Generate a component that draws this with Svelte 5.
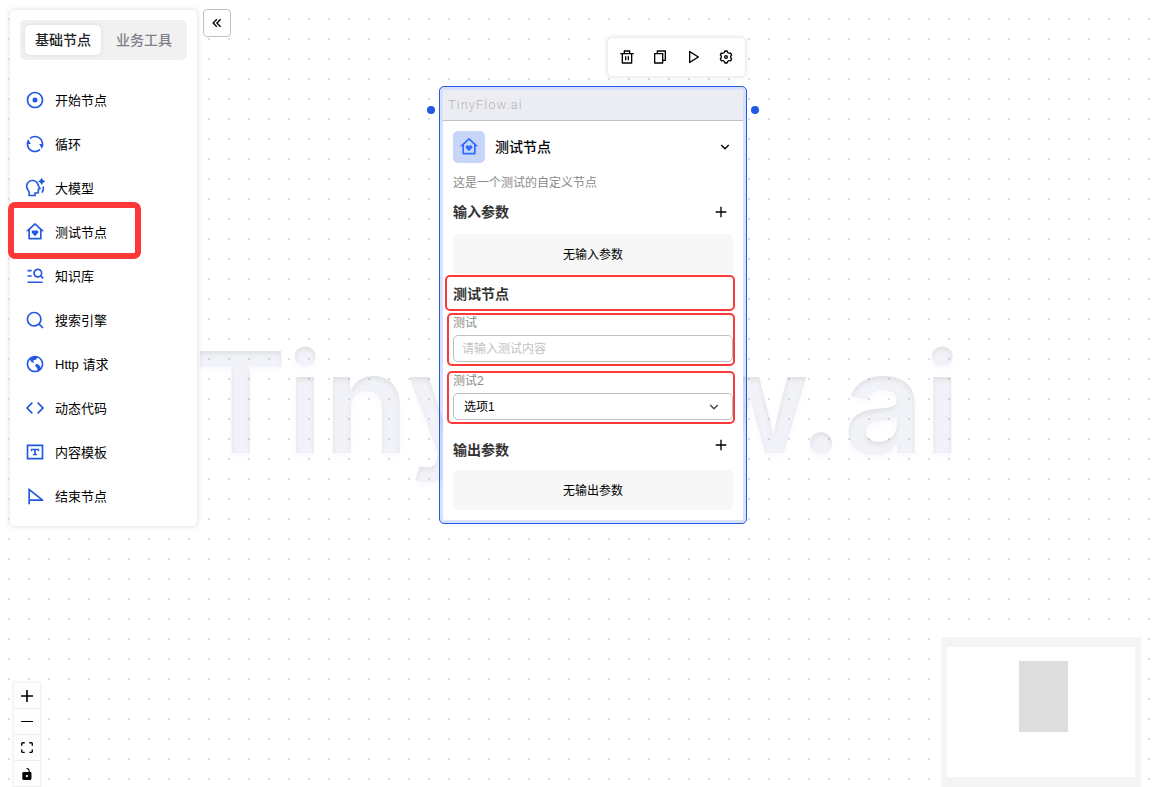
<script>
  const home =
    'M20 20C20 20.5523 19.5523 21 19 21H5C4.44772 21 4 20.5523 4 20V11L1 11L11.3273 1.6115C11.7087 1.26475 12.2913 1.26475 12.6727 1.6115L23 11L20 11V20ZM18 19V9.15745L12 3.7029L6 9.15745V19H18ZM12 17L8.64124 13.6412C7.76256 12.7625 7.76256 11.3379 8.64124 10.4592C9.51992 9.58056 10.9445 9.58056 11.8232 10.4592L12 10.636L12.1768 10.4592C13.0555 9.58056 14.4801 9.58056 15.3588 10.4592C16.2375 11.3379 16.2375 12.7625 15.3588 13.6412L12 17Z';

  const nodeTypes = [
    {
      label: '开始节点',
      icon: 'M12 22C6.477 22 2 17.523 2 12S6.477 2 12 2s10 4.477 10 10-4.477 10-10 10Zm0-2a8 8 0 1 0 0-16 8 8 0 0 0 0 16Zm0-5a3 3 0 1 1 0-6 3 3 0 0 1 0 6Z'
    },
    {
      label: '循环',
      icon: 'M5.46257 4.43262C7.21556 2.91688 9.5007 2 12 2C17.5228 2 22 6.47715 22 12C22 14.1361 21.3302 16.1158 20.1892 17.7406L17 12H20C20 7.58172 16.4183 4 12 4C9.84982 4 7.89777 4.84827 6.46023 6.22842L5.46257 4.43262ZM18.5374 19.5674C16.7844 21.0831 14.4993 22 12 22C6.47715 22 2 17.5228 2 12C2 9.86386 2.66979 7.88416 3.8108 6.25944L7 12H4C4 16.4183 7.58172 20 12 20C14.1502 20 16.1022 19.1517 17.5398 17.7716L18.5374 19.5674Z'
    },
    {
      label: '大模型',
      icon: 'M20.7134 7.12811L20.4668 7.69379C20.2864 8.10792 19.7136 8.10792 19.5331 7.69379L19.2866 7.12811C18.8471 6.11947 18.0555 5.31641 17.0677 4.87708L16.308 4.53922C15.8973 4.35653 15.8973 3.75881 16.308 3.57612L17.0252 3.25714C18.0384 2.80651 18.8442 1.97373 19.2761 0.930828L19.5293 0.319534C19.7058 -0.106511 20.2942 -0.106511 20.4706 0.319534L20.7238 0.930828C21.1558 1.97373 21.9616 2.80651 22.9748 3.25714L23.6919 3.57612C24.1027 3.75881 24.1027 4.35653 23.6919 4.53922L22.9323 4.87708C21.9445 5.31641 21.1529 6.11947 20.7134 7.12811ZM9 2C13.0675 2 16.4262 5.03562 16.9337 8.96494L19.1842 12.5037C19.3324 12.7367 19.3025 13.0847 18.9593 13.2317L17 14.071V17C17 18.1046 16.1046 19 15 19H13.001L13 22H4L4.00025 18.3061C4.00033 17.1252 3.56351 16.0087 2.7555 15.0011C1.65707 13.6313 1 11.8924 1 10C1 5.58172 4.58172 2 9 2ZM9 4C5.68629 4 3 6.68629 3 10C3 11.3849 3.46818 12.6929 4.31578 13.7499C5.40965 15.114 6.00036 16.6672 6.00025 18.3063L6.00013 20H11.0007L11.0017 17H15V12.7519L16.5497 12.0881L15.0072 9.66262L14.9501 9.22118C14.5665 6.25141 12.0243 4 9 4ZM19.4893 16.9929L21.1535 18.1024C22.32 16.3562 23 14.2576 23 12.0001C23 11.317 22.9378 10.6486 22.8186 10L20.8756 10.5C20.9574 10.9878 21 11.489 21 12.0001C21 13.8471 20.4436 15.5642 19.4893 16.9929Z'
    },
    { label: '测试节点', icon: home, marked: true },
    {
      label: '知识库',
      icon: 'M3 4.5H8V6.5H3V4.5ZM3 11H8V13H3V11ZM3 18.5H21V20.5H3V18.5ZM15.5 3A5.5 5.5 0 0 1 20.1 11.6L22.7 14.2L21.3 15.6L18.6 12.9A5.5 5.5 0 1 1 15.5 3ZM15.5 5A3.5 3.5 0 1 0 15.5 12A3.5 3.5 0 0 0 15.5 5Z'
    },
    {
      label: '搜索引擎',
      icon: 'M18.031 16.6168L22.3137 20.8995L20.8995 22.3137L16.6168 18.031C15.0769 19.263 13.124 20 11 20C6.032 20 2 15.968 2 11C2 6.032 6.032 2 11 2C15.968 2 20 6.032 20 11C20 13.124 19.263 15.0769 18.031 16.6168ZM16.0247 15.8748C17.2475 14.6146 18 12.8956 18 11C18 7.1325 14.8675 4 11 4C7.1325 4 4 7.1325 4 11C4 14.8675 7.1325 18 11 18C12.8956 18 14.6146 17.2475 15.8748 16.0247L16.0247 15.8748Z'
    },
    {
      label: 'Http 请求',
      icon: 'M6.23509 6.45329C4.85101 7.89148 4 9.84636 4 12C4 16.4183 7.58172 20 12 20C13.0808 20 14.1116 19.7857 15.0521 19.3972C15.1671 18.6467 14.9148 17.9266 14.8116 17.6746C14.582 17.115 13.8241 16.1582 12.5589 14.8308C12.2212 14.4758 12.2429 14.2035 12.3636 13.3943L12.3775 13.3029C12.4595 12.7486 12.5971 12.4209 14.4622 12.1248C15.4097 11.9746 15.6589 12.3533 16.0043 12.8777C16.0425 12.9358 16.0807 12.9928 16.1198 13.0499C16.4479 13.5297 16.691 13.6394 17.0582 13.8064C17.2227 13.881 17.428 13.9751 17.7031 14.1314C18.3551 14.504 18.3551 14.9247 18.3551 15.8472V15.9518C18.3551 16.3434 18.3168 16.6872 18.2566 16.9859C19.3478 15.6185 20 13.8854 20 12C20 8.70089 18.003 5.8682 15.1519 4.64482C14.5987 5.01813 13.8398 5.54726 13.575 5.91C13.4396 6.09538 13.2482 7.04166 12.6257 7.11976C12.4626 7.14023 12.2438 7.12589 12.012 7.11097C11.3905 7.07058 10.5402 7.01606 10.268 7.75495C10.0952 8.2232 10.0648 9.49445 10.6239 10.1543C10.7134 10.2597 10.7307 10.4547 10.6699 10.6735C10.59 10.9608 10.4286 11.1356 10.3783 11.1717C10.2819 11.1163 10.0896 10.8931 9.95938 10.7412C9.64554 10.3765 9.25405 9.92233 8.74797 9.78176C8.56395 9.73083 8.36166 9.68867 8.16548 9.64736C7.6164 9.53227 6.99443 9.40134 6.84992 9.09302C6.74442 8.8672 6.74488 8.55621 6.74529 8.22764C6.74529 7.8112 6.74529 7.34029 6.54129 6.88256C6.46246 6.70541 6.35689 6.56446 6.23509 6.45329ZM12 22C6.47715 22 2 17.5228 2 12C2 6.47715 6.47715 2 12 2C17.5228 2 22 6.47715 22 12C22 17.5228 17.5228 22 12 22Z'
    },
    {
      label: '动态代码',
      icon: 'M23 12L15.9289 19.0711L14.5147 17.6569L20.1716 12L14.5147 6.34317L15.9289 4.92896L23 12ZM3.82843 12L9.48528 17.6569L8.07107 19.0711L1 12L8.07107 4.92896L9.48528 6.34317L3.82843 12Z'
    },
    {
      label: '内容模板',
      icon: 'M2 3H22V21H2V3ZM4 5V19H20V5H4ZM7 8H17V11H15.5V9.8H13V14.4H14.5V16H9.5V14.4H11V9.8H8.5V11H7V8Z'
    },
    {
      label: '结束节点',
      icon: 'M4 2.2L22 16.6V18H6V22H4V2.2ZM6 6.3V16H18.1L6 6.3Z'
    }
  ];

  const toolbar = [
    {
      label: '删除',
      icon: 'M17 6H22V8H20V21C20 21.5523 19.5523 22 19 22H5C4.44772 22 4 21.5523 4 21V8H2V6H7V3C7 2.44772 7.44772 2 8 2H16C16.5523 2 17 2.44772 17 3V6ZM18 8H6V20H18V8ZM9 11H11V17H9V11ZM13 11H15V17H13V11ZM9 4V6H15V4H9Z'
    },
    {
      label: '复制',
      icon: 'M6.9998 6V3C6.9998 2.44772 7.44752 2 7.9998 2H19.9998C20.5521 2 20.9998 2.44772 20.9998 3V17C20.9998 17.5523 20.5521 18 19.9998 18H16.9998V20.9991C16.9998 21.5519 16.5499 22 15.993 22H4.00666C3.45059 22 3 21.5554 3 20.9991L3.0026 7.00087C3.0027 6.44811 3.45264 6 4.00942 6H6.9998ZM5.00242 8L5.00019 20H14.9998V8H5.00242ZM8.9998 6H16.9998V16H18.9998V4H8.9998V6Z'
    },
    {
      label: '运行',
      icon: 'M8 18.3915V5.60846L18.2264 12L8 18.3915ZM6 3.80421V20.1957C6 20.9812 6.86395 21.46 7.53 21.0437L20.6432 12.848C21.2699 12.4563 21.2699 11.5436 20.6432 11.152L7.53 2.95621C6.86395 2.53993 6 3.01878 6 3.80421Z'
    },
    {
      label: '设置',
      icon: 'M3.33946 17.0002C2.90721 16.2515 2.58277 15.4702 2.36133 14.6741C3.3338 14.1779 3.99972 13.1668 3.99972 12.0002C3.99972 10.8345 3.3348 9.824 2.36353 9.32741C2.81025 7.71651 3.65857 6.21627 4.86474 4.99001C5.7807 5.58416 6.98935 5.65534 7.99972 5.072C9.01009 4.48866 9.55277 3.40635 9.4962 2.31604C11.1613 1.8846 12.8847 1.90004 14.5031 2.31862C14.4475 3.40806 14.9901 4.48912 15.9997 5.072C17.0101 5.65532 18.2187 5.58416 19.1346 4.99007C19.7133 5.57986 20.2277 6.25151 20.66 7.00021C21.0922 7.7489 21.4167 8.53025 21.6381 9.32628C20.6656 9.82247 19.9997 10.8336 19.9997 12.0002C19.9997 13.166 20.6646 14.1764 21.6359 14.673C21.1892 16.2839 20.3409 17.7841 19.1347 19.0104C18.2187 18.4163 17.0101 18.3451 15.9997 18.9284C14.9893 19.5117 14.4467 20.5941 14.5032 21.6844C12.8382 22.1158 11.1148 22.1004 9.49633 21.6818C9.55191 20.5923 9.00929 19.5113 7.99972 18.9284C6.98938 18.3451 5.78079 18.4162 4.86484 19.0103C4.28617 18.4205 3.77172 17.7489 3.33946 17.0002ZM8.99972 17.1964C10.0911 17.8265 10.8749 18.8227 11.2503 19.9659C11.7486 20.0133 12.2502 20.014 12.7486 19.9675C13.1238 18.8237 13.9078 17.8268 14.9997 17.1964C16.0916 16.5659 17.347 16.3855 18.5252 16.6324C18.8146 16.224 19.0648 15.7892 19.2729 15.334C18.4706 14.4373 17.9997 13.2604 17.9997 12.0002C17.9997 10.74 18.4706 9.5632 19.2729 8.6665C19.1688 8.4405 19.0538 8.21822 18.9279 8.00021C18.802 7.78219 18.667 7.57148 18.5233 7.36842C17.3457 7.61476 16.0911 7.43414 14.9997 6.80405C13.9083 6.17395 13.1246 5.17768 12.7491 4.03455C12.2509 3.98714 11.7492 3.98646 11.2509 4.03292C10.8756 5.17671 10.0916 6.17364 8.99972 6.80405C7.9078 7.43447 6.65245 7.61494 5.47428 7.36803C5.18485 7.77641 4.93463 8.21117 4.72656 8.66637C5.52881 9.56311 5.99972 10.74 5.99972 12.0002C5.99972 13.2604 5.52883 14.4372 4.72656 15.3339C4.83067 15.5599 4.94564 15.7822 5.07152 16.0002C5.19739 16.2182 5.3324 16.4289 5.47612 16.632C6.65377 16.3857 7.90838 16.5663 8.99972 17.1964ZM11.9997 15.0002C10.3429 15.0002 8.99972 13.6571 8.99972 12.0002C8.99972 10.3434 10.3429 9.00021 11.9997 9.00021C13.6566 9.00021 14.9997 10.3434 14.9997 12.0002C14.9997 13.6571 13.6566 15.0002 11.9997 15.0002ZM11.9997 13.0002C12.552 13.0002 12.9997 12.5525 12.9997 12.0002C12.9997 11.4479 12.552 11.0002 11.9997 11.0002C11.4474 11.0002 10.9997 11.4479 10.9997 12.0002C10.9997 12.5525 11.4474 13.0002 11.9997 13.0002Z'
    }
  ];

  const controls = [
    { label: '放大', box: '0 0 32 32', icon: 'M32 18.133H18.133V32h-4.266V18.133H0v-4.266h13.867V0h4.266v13.867H32z' },
    { label: '缩小', box: '0 0 32 5', icon: 'M0 0h32v4.2H0z' },
    {
      label: '适应画布',
      box: '0 0 32 30',
      icon: 'M3.692 4.63c0-.53.4-.938.939-.938h5.215V0H4.708C2.13 0 0 2.054 0 4.63v5.216h3.692V4.631zM27.354 0h-5.2v3.692h5.17c.53 0 .984.4.984.939v5.215H32V4.631A4.624 4.624 0 0027.354 0zm.954 24.83c0 .532-.4.94-.939.94h-5.215v3.768h5.215c2.577 0 4.631-2.13 4.631-4.707v-5.139h-3.692v5.139zm-23.677.94c-.531 0-.939-.4-.939-.94v-5.138H0v5.139c0 2.577 2.13 4.707 4.708 4.707h5.138V25.77H4.631z'
    },
    {
      label: '锁定',
      box: '0 0 25 32',
      icon: 'M21.333 10.667H19.81V7.619C19.81 3.429 16.38 0 12.19 0c-4.114 1.828-1.37 2.133.305 2.438 1.676.305 4.42 2.59 4.42 5.181v3.048H3.047A3.056 3.056 0 000 13.714v15.238A3.056 3.056 0 003.048 32h18.285a3.056 3.056 0 003.048-3.048V13.714a3.056 3.056 0 00-3.048-3.047zM12.19 24.533a3.056 3.056 0 01-3.047-3.047 3.056 3.056 0 013.047-3.048 3.056 3.056 0 013.048 3.048 3.056 3.056 0 01-3.048 3.047z'
    }
  ];

  let tab = $state('基础节点');
  let collapsed = $state(false);
  let expanded = $state(true);
  let text = $state('');
  let choice = $state('选项1');
</script>

{#snippet icon(d)}
  <svg viewBox="0 0 24 24" fill="currentColor" aria-hidden="true"><path {d} fill-rule="evenodd" /></svg>
{/snippet}

{#snippet plus()}
  <svg viewBox="0 0 24 24" fill="currentColor" aria-hidden="true"><path d="M11 11V4H13V11H20V13H13V20H11V13H4V11H11Z" /></svg>
{/snippet}

<main class="canvas">
  <div class="watermark" aria-hidden="true"><span>TinyFlow.ai</span></div>
  <svg class="dots" aria-hidden="true">
    <pattern id="grid" width="20" height="20" patternUnits="userSpaceOnUse">
      <rect x="8" y="18" width="2" height="2" fill="#000" fill-opacity="0.13" />
    </pattern>
    <rect width="100%" height="100%" fill="url(#grid)" />
  </svg>

  <div class="side">
    {#if !collapsed}
      <aside class="palette">
        <div class="tabs">
          {#each ['基础节点', '业务工具'] as name}
            <button class="tab" class:active={tab === name} onclick={() => (tab = name)}>{name}</button>
          {/each}
        </div>
        <div class="types">
          {#each nodeTypes as t}
            <button class="type" class:marked={t.marked}>{@render icon(t.icon)}<span>{t.label}</span></button>
          {/each}
        </div>
      </aside>
    {/if}
    <button class="toggle" aria-label="收起面板" onclick={() => (collapsed = !collapsed)}>
      <svg viewBox="0 0 24 24" fill="currentColor" aria-hidden="true">
        <path d="M4.83582 12L11.0429 18.2071L12.4571 16.7929L7.66424 12L12.4571 7.20712L11.0429 5.79291L4.83582 12ZM10.4857 12L16.6928 18.2071L18.107 16.7929L13.3141 12L18.107 7.20712L16.6928 5.79291L10.4857 12Z" />
      </svg>
    </button>
  </div>

  <div class="node">
    <div class="toolbar">
      {#each toolbar as t}
        <button aria-label={t.label}>{@render icon(t.icon)}</button>
      {/each}
    </div>
    <i class="handle in"></i>
    <i class="handle out"></i>
    <div class="card">
      <div class="brand">TinyFlow.ai</div>
      <div class="body">
        <div class="title">
          <span class="badge">{@render icon(home)}</span>
          <span class="name">测试节点</span>
          <button class="plain" aria-label="展开" aria-expanded={expanded} onclick={() => (expanded = !expanded)}>
            <svg viewBox="0 0 24 24" fill="currentColor" aria-hidden="true"><path d="M11.9999 13.1714L16.9497 8.22168L18.3639 9.63589L11.9999 15.9999L5.63599 9.63589L7.0502 8.22168L11.9999 13.1714Z" /></svg>
          </button>
        </div>
        <p class="desc">这是一个测试的自定义节点</p>

        <div class="heading first">
          <h3>输入参数</h3>
          <button class="plain" aria-label="添加输入参数">{@render plus()}</button>
        </div>
        <div class="empty">无输入参数</div>

        <div class="heading section marked"><h3>测试节点</h3></div>

        <div class="field marked">
          <label for="test">测试</label>
          <input id="test" type="text" placeholder="请输入测试内容" bind:value={text} />
        </div>
        <div class="field marked">
          <label for="test2">测试2</label>
          <div class="select">
            <select id="test2" bind:value={choice}>
              <option>选项1</option>
              <option>选项2</option>
            </select>
            <svg viewBox="0 0 24 24" fill="currentColor" aria-hidden="true"><path d="M11.9999 13.1714L16.9497 8.22168L18.3639 9.63589L11.9999 15.9999L5.63599 9.63589L7.0502 8.22168L11.9999 13.1714Z" /></svg>
          </div>
        </div>

        <div class="heading output">
          <h3>输出参数</h3>
          <button class="plain" aria-label="添加输出参数">{@render plus()}</button>
        </div>
        <div class="empty">无输出参数</div>
      </div>
    </div>
  </div>

  <div class="controls">
    {#each controls as c}
      <button aria-label={c.label}><svg viewBox={c.box} aria-hidden="true"><path d={c.icon} /></svg></button>
    {/each}
  </div>

  <div class="minimap">
    <svg viewBox="0 0 200 150" role="img" aria-label="缩略图">
      <rect x="78" y="24" width="49" height="71" fill="#ddd" />
      <path d="M0 0H200V150H0ZM6 10V140H194V10Z" fill="#f4f4f4" fill-rule="evenodd" />
    </svg>
  </div>
</main>

<style>
  :global(body) {
    margin: 0;
    background: #fff;
  }

  .canvas,
  .canvas :is(button, input, select) {
    font-family: 'Liberation Sans', 'Noto Sans CJK SC', sans-serif;
  }

  .canvas {
    position: relative;
    box-sizing: border-box;
    min-height: 100vh;
    padding: 9px;
    overflow: hidden;
    background: #fff;
    color: #000;
    font-size: 12px;
    line-height: 18px;
  }

  button {
    padding: 0;
    border: 0;
    background: none;
    color: inherit;
    cursor: pointer;
  }

  svg {
    display: block;
  }

  .watermark,
  .dots {
    position: absolute;
    inset: 0;
    width: 100%;
    height: 100%;
  }

  .watermark {
    display: flex;
    align-items: center;
    justify-content: center;
    box-sizing: border-box;
    padding-top: 16px;
    font: 600 140px/176px Inter, sans-serif;
  }

  .watermark span {
    color: transparent;
    background: #dfe1e2;
    background-clip: text;
    -webkit-background-clip: text;
    text-shadow: 0 3px 5px rgba(246, 248, 255, 0.8);
  }

  .side {
    position: relative;
    display: flex;
    align-items: flex-start;
    gap: 5px;
    width: max-content;
  }

  .palette {
    box-sizing: border-box;
    padding: 10px;
    border: 1px solid #eee;
    border-radius: 5px;
    background: #fff;
    box-shadow: 0 0 5px rgba(0, 0, 0, 0.1);
  }

  .tabs {
    display: flex;
    gap: 5px;
    padding: 5px;
    border-radius: 5px;
    background: #f1f1f1;
  }

  .tab {
    height: 30px;
    padding: 0 10px 2px;
    border-radius: 5px;
    color: #808088;
    font-size: 14px;
    font-weight: 500;
  }

  .tab.active {
    background: #fff;
    color: #222;
    box-shadow: 0 0 4px rgba(0, 0, 0, 0.1);
  }

  .types {
    display: flex;
    flex-direction: column;
    gap: 10px;
    padding: 23px 0 3px;
  }

  .type {
    position: relative;
    display: flex;
    align-items: center;
    gap: 10px;
    height: 34px;
    padding: 0 5px;
    font-size: 13px;
  }

  .type span {
    padding-bottom: 2px;
  }

  .type svg {
    width: 20px;
    height: 20px;
    color: #2159e3;
  }

  .toggle {
    display: grid;
    place-items: center;
    width: 28px;
    height: 28px;
    border: 1px solid #c0c0c0;
    border-radius: 4px;
    background: #fff;
  }

  .toggle svg,
  .toolbar svg,
  .plain svg {
    width: 16px;
    height: 16px;
  }

  .marked {
    position: relative;
  }

  .marked::after {
    content: '';
    position: absolute;
    border: 2px solid #fd3838;
    border-radius: 5px;
    pointer-events: none;
  }

  .type.marked::after {
    inset: -13px 46px -10px -12px;
    border-width: 6px;
    border-radius: 7px;
  }

  .heading.marked::after {
    inset: -9px -2px -7px -8px;
  }

  .field.marked::after {
    inset: -1px -2px -4px -6px;
  }

  .node {
    position: absolute;
    top: 86px;
    left: 439px;
    box-sizing: border-box;
    width: 308px;
    padding: 3px;
    border: 1px solid #2159e3;
    border-radius: 5px;
    background: rgba(33, 89, 227, 0.18);
  }

  .card {
    overflow: hidden;
    border-radius: 2px;
    background: #fff;
  }

  .toolbar {
    position: absolute;
    right: 0;
    bottom: 100%;
    display: flex;
    gap: 17px;
    margin-bottom: 10px;
    padding: 11px;
    border: 1px solid #eee;
    border-radius: 5px;
    background: #fff;
    box-shadow: 0 0 5px rgba(0, 0, 0, 0.1);
  }

  .handle {
    position: absolute;
    top: 19px;
    width: 8px;
    height: 8px;
    border-radius: 50%;
    background: #2159e3;
  }

  .handle.in {
    left: -13px;
  }

  .handle.out {
    right: -13px;
  }

  .brand {
    padding: 0 5px;
    border-bottom: 1px solid #c0c0c4;
    background: #ecedf2;
    color: #b4b4b8;
    font: 300 13px/30px Roboto, sans-serif;
    letter-spacing: 1px;
  }

  .body {
    padding: 10px;
  }

  .title {
    display: flex;
    align-items: center;
    gap: 10px;
  }

  .badge {
    display: grid;
    place-items: center;
    width: 32px;
    height: 32px;
    border-radius: 5px;
    background: #c7d5f9;
    color: #2f6bff;
  }

  .badge svg {
    width: 20px;
    height: 20px;
  }

  .name {
    flex: 1;
    font-size: 14px;
    font-weight: 500;
  }

  .desc {
    margin: 11px 0 10px;
    color: #8a8a8a;
  }

  .heading {
    display: flex;
    align-items: center;
    justify-content: space-between;
    height: 20px;
  }

  .heading .plain {
    margin-right: 4px;
  }

  .heading.first {
    margin-bottom: 12px;
  }

  .heading.section {
    margin: 10px 0;
  }

  .heading.output {
    align-items: flex-start;
    margin: 20px 0 10px;
  }

  .heading.output .plain {
    margin-top: -3px;
  }

  h3 {
    margin: 0;
    color: #333;
    font-size: 14px;
    font-weight: 700;
    line-height: 20px;
  }

  .empty {
    padding-top: 2px;
    border-radius: 5px;
    background: #f7f7f7;
    line-height: 38px;
    text-align: center;
  }

  .field {
    display: flex;
    flex-direction: column;
    gap: 3px;
  }

  .field + .field {
    margin-top: 10px;
  }

  label {
    color: #8a8a8a;
  }

  input,
  select {
    display: block;
    box-sizing: border-box;
    width: 100%;
    height: 27px;
    margin: 0;
    border: 1px solid #c0c0c0;
    border-radius: 5px;
    background: #fff;
    color: #000;
    font-size: 12px;
  }

  input {
    padding: 0 8px;
  }

  input::placeholder {
    color: #c2c2c2;
  }

  .select {
    position: relative;
  }

  select {
    padding: 0 10px;
    appearance: none;
  }

  .select svg {
    position: absolute;
    top: 6px;
    right: 11px;
    width: 16px;
    height: 16px;
    color: #444;
    pointer-events: none;
  }

  .controls {
    position: absolute;
    bottom: 0;
    left: 14px;
    display: flex;
    flex-direction: column;
    box-shadow: 0 0 2px 1px rgba(0, 0, 0, 0.08);
  }

  .controls button {
    display: grid;
    place-items: center;
    box-sizing: border-box;
    width: 26px;
    height: 26px;
    border-bottom: 1px solid #eee;
    background: #fefefe;
  }

  .controls svg {
    width: 12px;
    max-height: 12px;
  }

  .minimap {
    position: absolute;
    right: 14px;
    bottom: 0;
    width: 200px;
    background: #fff;
  }
</style>
